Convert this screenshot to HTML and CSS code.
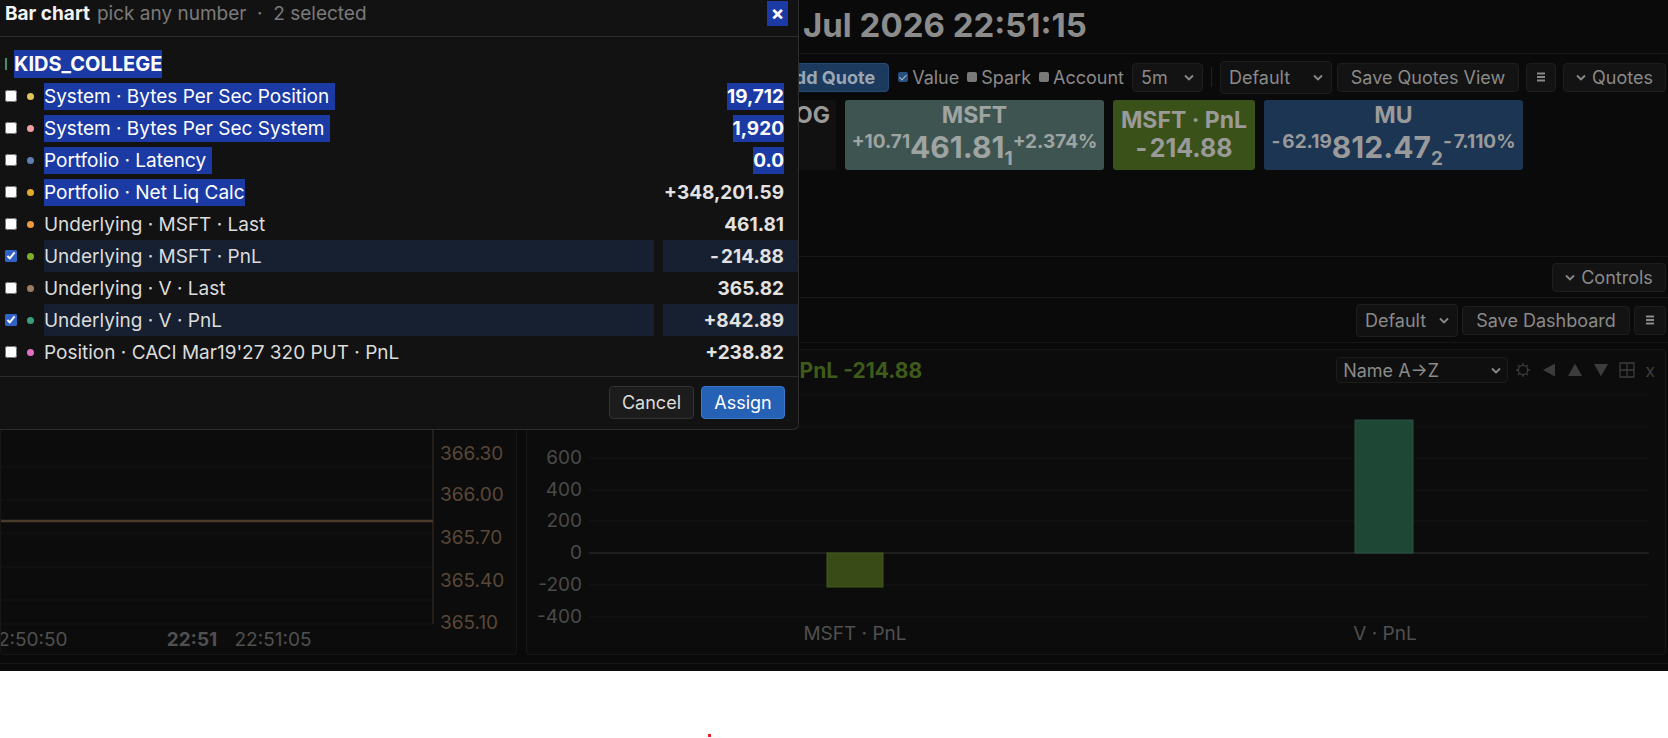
FILE: index.html
```html
<!DOCTYPE html>
<html lang="en">

<head>
    <meta charset="UTF-8">
    <title>Dashboard</title>
    <link rel="stylesheet" href="styles.css">
</head>

<body>
    <div class="app">
        <header class="top">
            <div class="clock">Jul 2026 22:51:15</div>
        </header>

        <section class="quotes">
            <div class="toolbar">
                <button class="btn primary add">+ Add Quote</button>
                <label class="opt"><span class="box on"></span>Value</label>
                <label class="opt"><span class="box"></span>Spark</label>
                <label class="opt"><span class="box"></span>Account</label>
                <div class="sel w-5m">5m <svg class="chev" viewBox="0 0 10 6"><path d="M1 1l4 4 4-4" /></svg></div>
                <span class="vsep"></span>
                <div class="sel w-def">Default <svg class="chev" viewBox="0 0 10 6"><path d="M1 1l4 4 4-4" /></svg></div>
                <button class="btn w-sqv">Save Quotes View</button>
                <button class="btn icon"><svg viewBox="0 0 12 12"><path d="M2 2.5h8M2 6h8M2 9.5h8" /></svg></button>
                <button class="btn w-quotes"><svg class="chev" viewBox="0 0 10 6"><path d="M1 1l4 4 4-4" /></svg> Quotes</button>
            </div>
            <div class="tiles">
                <div class="tile plain w-goog"><div class="sym">GOOG</div></div>
                <div class="tile msft">
                    <div class="sym">MSFT</div>
                    <div class="px"><sup>+10.71</sup>461.81<sub>1</sub><sup>+2.374%</sup></div>
                </div>
                <div class="tile pnl">
                    <div class="sym">MSFT · PnL</div>
                    <div class="big"><span class="neg">-</span>214.88</div>
                </div>
                <div class="tile mu">
                    <div class="sym">MU</div>
                    <div class="px"><sup><span class="neg">-</span>62.19</sup>812.47<sub>2</sub><sup><span class="neg">-</span>7.110%</sup></div>
                </div>
            </div>
        </section>

        <div class="bar-row controls-row">
            <button class="btn w-ctrl"><svg class="chev" viewBox="0 0 10 6"><path d="M1 1l4 4 4-4" /></svg> Controls</button>
        </div>

        <div class="bar-row dash-row">
            <div class="sel w-dash">Default <svg class="chev" viewBox="0 0 10 6"><path d="M1 1l4 4 4-4" /></svg></div>
            <button class="btn w-sd">Save Dashboard</button>
            <button class="btn icon"><svg viewBox="0 0 12 12"><path d="M2 2.5h8M2 6h8M2 9.5h8" /></svg></button>
        </div>

        <div class="panels">
            <div class="panel">
                <svg class="chart" width="515" height="304" viewBox="0 0 515 304">
                    <g class="grid">
                        <line x1="0" y1="117" x2="432" y2="117" />
                        <line x1="0" y1="150" x2="432" y2="150" />
                        <line x1="0" y1="183" x2="432" y2="183" />
                        <line x1="0" y1="217" x2="432" y2="217" />
                        <line x1="0" y1="250" x2="432" y2="250" />
                        <line x1="0" y1="274" x2="432" y2="274" />
                    </g>
                    <line class="axis" x1="432" y1="0" x2="432" y2="274" />
                    <line class="series" x1="0" y1="171" x2="432" y2="171" />
                    <g class="ylab">
                        <text x="439" y="110">366.30</text>
                        <text x="439" y="151">366.00</text>
                        <text x="439" y="194">365.70</text>
                        <text x="439" y="237">365.40</text>
                        <text x="439" y="279">365.10</text>
                    </g>
                    <g class="xlab">
                        <text x="26" y="296" text-anchor="middle">22:50:50</text>
                        <text x="191" y="296" text-anchor="middle" class="strong">22:51</text>
                        <text x="272" y="296" text-anchor="middle">22:51:05</text>
                    </g>
                </svg>
            </div>
            <div class="panel">
                <div class="panel-head">
                    <span class="legend">MSFT · PnL -214.88</span>
                    <div class="sel w-sort">Name A→Z <svg class="chev" viewBox="0 0 10 6"><path d="M1 1l4 4 4-4" /></svg></div>
                    <div class="tools">
                        <svg viewBox="0 0 16 16"><circle cx="8" cy="8" r="4.6" /><path d="M8 1v2.2M8 12.8V15M1 8h2.2M12.8 8H15M3 3l1.6 1.6M11.4 11.4L13 13M3 13l1.6-1.6M11.4 4.6L13 3" /></svg>
                        <svg viewBox="0 0 16 16"><path class="fill" d="M14 1.5v13L2 8z" /></svg>
                        <svg viewBox="0 0 16 16"><path class="fill" d="M8 1.5l7 12.5H1z" /></svg>
                        <svg viewBox="0 0 16 16"><path class="fill" d="M1 2h14L8 14.5z" /></svg>
                        <svg viewBox="0 0 16 16"><path d="M1 1h14v14H1zM8 1v14M1 8h14" /></svg>
                        <span class="x">x</span>
                    </div>
                </div>
                <svg class="chart bars" width="1138" height="263" viewBox="0 0 1138 263">
                    <g class="grid">
                        <line x1="62" y1="3" x2="1122" y2="3" />
                        <line x1="62" y1="35" x2="1122" y2="35" />
                        <line x1="62" y1="66" x2="1122" y2="66" />
                        <line x1="62" y1="98" x2="1122" y2="98" />
                        <line x1="62" y1="129" x2="1122" y2="129" />
                        <line x1="62" y1="193" x2="1122" y2="193" />
                        <line x1="62" y1="225" x2="1122" y2="225" />
                    </g>
                    <line class="zero" x1="62" y1="161" x2="1122" y2="161" />
                    <rect class="bar-msft" x="300" y="161" width="56" height="34" />
                    <rect class="bar-v" x="828" y="28" width="58" height="133" />
                    <g class="blab">
                        <text x="55" y="72">600</text>
                        <text x="55" y="104">400</text>
                        <text x="55" y="135">200</text>
                        <text x="55" y="167">0</text>
                        <text x="55" y="199">-200</text>
                        <text x="55" y="231">-400</text>
                    </g>
                    <g class="xlab">
                        <text x="328" y="248" text-anchor="middle">MSFT · PnL</text>
                        <text x="858" y="248" text-anchor="middle">V · PnL</text>
                    </g>
                </svg>
            </div>
        </div>
        <div class="foot-line"></div>

        <div class="modal">
            <div class="modal-head">
                <b>Bar chart</b>
                <span class="hint">pick any number &nbsp;·&nbsp; 2 selected</span>
                <span class="close">×</span>
            </div>
            <div class="modal-body">
                <div class="group"><i></i><span class="hl">KIDS_COLLEGE</span></div>
                <div class="row">
                    <input type="checkbox"><span class="dot" style="background:#e3c45a"></span>
                    <span class="name"><span class="hl">System · Bytes Per Sec Position </span></span>
                    <span class="val"><span class="hl">19,712</span></span>
                </div>
                <div class="row">
                    <input type="checkbox"><span class="dot" style="background:#f0a0a4"></span>
                    <span class="name"><span class="hl">System · Bytes Per Sec System </span></span>
                    <span class="val"><span class="hl">1,920</span></span>
                </div>
                <div class="row">
                    <input type="checkbox"><span class="dot" style="background:#5f7fb0"></span>
                    <span class="name"><span class="hl">Portfolio · Latency </span></span>
                    <span class="val"><span class="hl">0.0</span></span>
                </div>
                <div class="row">
                    <input type="checkbox"><span class="dot" style="background:#e0ac2c"></span>
                    <span class="name"><span class="hl">Portfolio · Net Liq Calc</span></span>
                    <span class="val">+348,201.59</span>
                </div>
                <div class="row">
                    <input type="checkbox"><span class="dot" style="background:#ef9a3c"></span>
                    <span class="name">Underlying · MSFT · Last</span>
                    <span class="val">461.81</span>
                </div>
                <div class="row picked">
                    <input type="checkbox" checked><span class="dot" style="background:#7fae2a"></span>
                    <span class="name">Underlying · MSFT · PnL</span>
                    <span class="val"><span class="neg">-</span>214.88</span>
                </div>
                <div class="row">
                    <input type="checkbox"><span class="dot" style="background:#9c7c62"></span>
                    <span class="name">Underlying · V · Last</span>
                    <span class="val">365.82</span>
                </div>
                <div class="row picked">
                    <input type="checkbox" checked><span class="dot" style="background:#3c9e78"></span>
                    <span class="name">Underlying · V · PnL</span>
                    <span class="val">+842.89</span>
                </div>
                <div class="row">
                    <input type="checkbox"><span class="dot" style="background:#e070c4"></span>
                    <span class="name">Position · CACI Mar19'27 320 PUT · PnL</span>
                    <span class="val">+238.82</span>
                </div>
            </div>
            <div class="modal-foot">
                <button class="mbtn">Cancel</button>
                <button class="mbtn assign">Assign</button>
            </div>
        </div>
    </div>
    <div class="dot-mark"></div>
</body>

</html>
```

FILE: styles.css
```css
body {
    margin: 0;
    background: #fff;
    position: relative;
    height: 738px;
}

.app {
    position: relative;
    height: 671px;
    overflow: hidden;
    background: #0a0a0a;
    color: #8a8a8a;
    font-family: Inter, "Noto Sans", sans-serif;
    font-size: 18px;
}

.top {
    height: 53px;
    border-bottom: 1px solid #181818;

    .clock {
        padding-left: 803px;
        line-height: 50px;
        font-size: 33px;
        font-weight: 700;
        color: #8c8c8c;
    }
}

.quotes {
    height: 202px;
    box-sizing: border-box;
    padding-top: 8px;
}

.toolbar {
    display: flex;
    align-items: center;
    justify-content: flex-end;
    height: 30px;
    padding-right: 2px;
}

.btn,
.sel {
    display: flex;
    align-items: center;
    justify-content: center;
    gap: 6px;
    height: 29px;
    box-sizing: border-box;
    padding: 0 8px;
    background: #131313;
    border: 1px solid #1e1e1e;
    border-radius: 4px;
    color: #8a8a8a;
    font-family: inherit;
    font-size: 18px;
    white-space: nowrap;
}

.sel {
    justify-content: space-between;
}

.chev {
    width: 10px;
    height: 7px;
    fill: none;
    stroke: #8a8a8a;
    stroke-width: 1.8;
}

.btn.icon {
    width: 30px;
    padding: 0;

    svg {
        width: 12px;
        height: 12px;
        fill: none;
        stroke: #8a8a8a;
        stroke-width: 2.2;
    }
}

.btn.primary {
    background: #1b3a5e;
    border-color: #234a75;
    color: #9aa6b3;
    font-weight: 700;
    width: 140px;
    padding-right: 13px;
    justify-content: flex-end;
}

.add { margin-right: 9px; }

.opt {
    display: flex;
    align-items: center;
    gap: 4px;
    margin-right: 8px;
}

.box {
    width: 10px;
    height: 10px;
    border-radius: 2px;
    background: #7a7a7a;

    &.on {
        background: #28507e;
        position: relative;
    }

    &.on::after {
        content: "";
        position: absolute;
        left: 3px;
        top: 1px;
        width: 3px;
        height: 6px;
        border: solid #a8b4c0;
        border-width: 0 1.5px 1.5px 0;
        transform: rotate(45deg);
    }
}

.w-5m { width: 71px; }
.w-def { width: 112px; height: 33px; background: #111; }
.w-sqv { width: 182px; margin-left: 5px; }
.toolbar .btn.icon { margin-left: 7px; }
.w-quotes { width: 103px; margin-left: 7px; }

.vsep {
    width: 1px;
    height: 20px;
    background: #222;
    margin: 0 8px;
}

.tiles {
    display: flex;
    gap: 9px;
    margin-top: 8px;
    padding-left: 754px;
}

.tile {
    height: 70px;
    box-sizing: border-box;
    border-radius: 3px;
    text-align: center;
    font-weight: 700;
    color: #9a9a9a;
    padding-top: 2px;

    .sym {
        font-size: 23px;
        line-height: 27px;
    }

    .px {
        font-size: 30px;
        line-height: 36px;
        white-space: nowrap;
    }

    sup,
    sub {
        font-size: 19px;
        line-height: 0;
    }

    sup { vertical-align: 10px; }
    sub { vertical-align: -7px; }

    .big {
        font-size: 25px;
        line-height: 29px;
    }

    .neg { margin-right: 0.1em; }
}

.neg { margin-right: 0.12em; }

.w-goog { width: 82px; background: #111; }
.msft { width: 259px; background: #3e5450; color: #9ea4a2; }
.pnl { width: 142px; background: #3a5219; padding-top: 7px; }
.mu { width: 259px; background: #1b3553; }

.bar-row {
    display: flex;
    justify-content: flex-end;
    align-items: center;
    border-top: 1px solid #181818;
    padding-right: 2px;
}

.controls-row {
    height: 41px;
    align-items: flex-start;
    padding-top: 6px;
    box-sizing: border-box;

    .w-ctrl { width: 114px; }
}

.dash-row {
    height: 44px;

    .w-dash { width: 102px; height: 33px; background: #111; margin-right: 4px; }
    .w-sd { width: 168px; margin-right: 4px; }
    .btn.icon { width: 32px; }
}

.panels {
    display: grid;
    grid-template-columns: 517px 1fr;
    gap: 9px;
    border-top: 1px solid #151515;
    padding: 6px 2px 0 0;
    height: 306px;
}

.panel {
    background: #0c0c0c;
    border: 1px solid #171717;
    border-radius: 4px;
    overflow: hidden;
}

.chart {
    display: block;
    font-family: Inter, sans-serif;
    font-size: 19px;

    &.bars { margin-top: 2px; }

    .grid line { stroke: #151515; stroke-width: 1; }
    .zero { stroke: #252525; stroke-width: 1.5; }
    .axis { stroke: #2c2520; stroke-width: 1.5; }
    .series { stroke: #4a3a2a; stroke-width: 2.5; }
    .ylab text { fill: #594838; }
    .blab text { fill: #4a4a4a; text-anchor: end; }
    .xlab text { fill: #505050; }
    .strong { font-weight: 700; fill: #5c5c5c; }
    .bar-msft { fill: #394c17; stroke: #44591c; }
    .bar-v { fill: #1f4736; stroke: #285340; }
}

.panel-head {
    display: flex;
    align-items: center;
    height: 40px;
    padding: 0 10px 0 196px;

    .legend {
        color: #3f5b1a;
        font-weight: 700;
        font-size: 21px;
    }

    .w-sort {
        width: 172px;
        height: 26px;
        margin-left: auto;
        background: #0f0f0f;
        border-color: #1c1c1c;
        padding: 0 6px;
    }

    .tools {
        display: flex;
        align-items: center;
        gap: 10px;
        margin-left: 7px;

        svg {
            width: 16px;
            height: 16px;
            fill: none;
            stroke: #3c3c3c;
            stroke-width: 1.3;
        }

        .fill { fill: #3c3c3c; stroke: none; }
        .x { color: #3c3c3c; font-size: 18px; }
    }
}

.foot-line {
    margin-top: 8px;
    border-top: 1px solid #171717;
}

/* modal */
.modal {
    position: absolute;
    left: 0;
    top: 0;
    width: 799px;
    height: 430px;
    box-sizing: border-box;
    background: #121212;
    border-right: 1px solid #2e2e2e;
    border-bottom: 1px solid #2e2e2e;
    border-bottom-right-radius: 6px;
    color: #dcdcdc;
    font-size: 19px;
}

.modal-head {
    display: flex;
    align-items: flex-start;
    height: 37px;
    padding: 2px 10px 0 5px;
    box-sizing: border-box;
    border-bottom: 1px solid #2c2c2c;
    line-height: 24px;

    b { color: #f2f2f2; }

    .hint {
        color: #7a7a7a;
        margin-left: 7px;
    }

    .close {
        margin-left: auto;
        margin-top: -1px;
        width: 21px;
        height: 25px;
        line-height: 24px;
        text-align: center;
        background: #1b3aa3;
        color: #fff;
        font-weight: 700;
        font-size: 20px;
    }
}

.hl {
    background: #1b3aa3;
    color: #fff;
}

.modal-body {
    padding: 11px 0 8px;
    border-bottom: 1px solid #2c2c2c;
}

.group {
    display: flex;
    align-items: center;
    height: 32px;
    font-weight: 700;
    font-size: 20px;

    i {
        width: 2px;
        height: 12px;
        background: #3d9468;
        margin: 0 7px 0 5px;
    }

    .hl { padding: 2px 0; }
}

.row {
    display: flex;
    align-items: center;
    height: 32px;

    input {
        width: 12px;
        height: 12px;
        margin: 0 0 0 5px;
        accent-color: #2f62c4;
    }

    .dot {
        width: 7px;
        height: 7px;
        border-radius: 50%;
        margin: 0 10px 0 10px;
    }

    .name {
        width: 611px;
        height: 100%;
        display: flex;
        align-items: center;
        white-space: pre;
    }

    .val {
        width: 135px;
        height: 100%;
        margin-left: 9px;
        padding-right: 14px;
        box-sizing: border-box;
        display: flex;
        align-items: center;
        justify-content: flex-end;
        font-weight: 700;
        color: #e2e2e2;
    }

    .hl { padding: 2px 0; }

    &.picked .name,
    &.picked .val {
        background: #172030;
    }
}

.modal-foot {
    display: flex;
    justify-content: flex-end;
    gap: 7px;
    padding: 9px 13px 0 0;
}

.mbtn {
    height: 33px;
    padding: 0 12px;
    border-radius: 4px;
    border: 1px solid #333;
    background: #1c1c1c;
    color: #ddd;
    font-family: inherit;
    font-size: 18px;

    &.assign {
        background: #2561b4;
        border-color: #3a78cc;
        color: #fff;
        width: 84px;
    }
}

.dot-mark {
    position: absolute;
    left: 708px;
    top: 734px;
    width: 3px;
    height: 3px;
    background: #e22;
}
```
